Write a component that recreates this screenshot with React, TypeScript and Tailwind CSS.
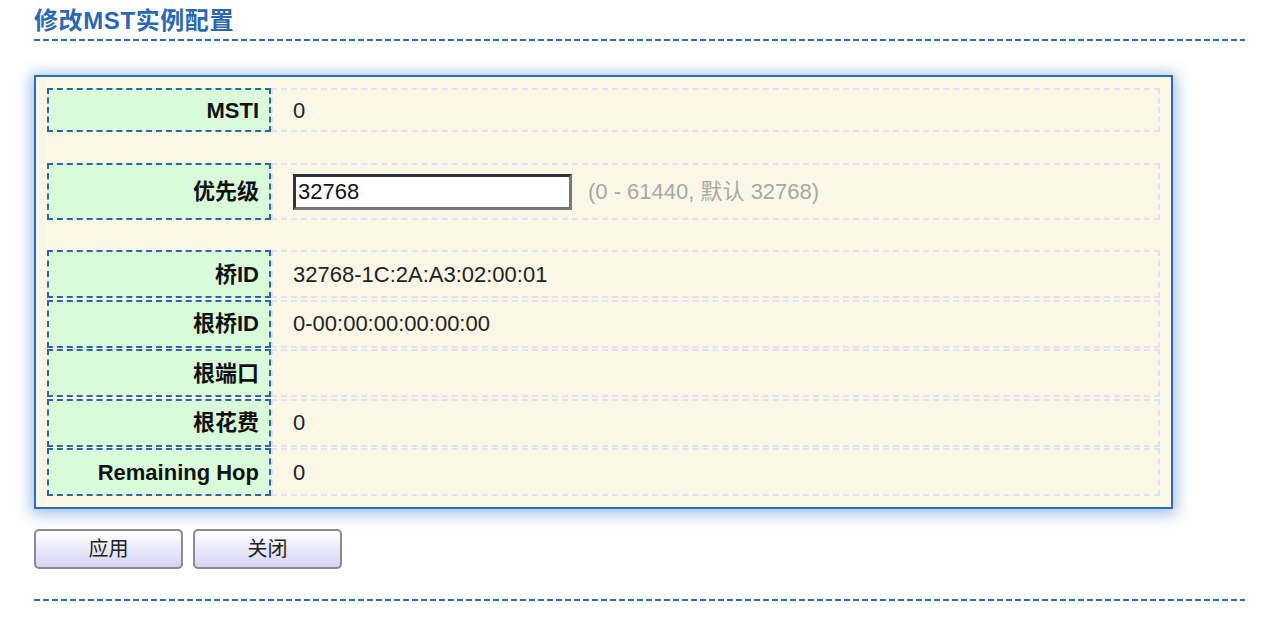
const rows = [
  { label: "桥ID", value: "32768-1C:2A:A3:02:00:01" },
  { label: "根桥ID", value: "0-00:00:00:00:00:00" },
  { label: "根端口", value: "" },
  { label: "根花费", value: "0" },
  { label: "Remaining Hop", value: "0" },
]

function DashLine() {
  return (
    <div className="h-[2px] w-full bg-[linear-gradient(to_right,#2f6db7_6px,transparent_6px)] bg-[length:9px_2px] bg-repeat-x" />
  )
}

function Row({ label, children, height }: { label: string; children?: React.ReactNode; height: string }) {
  return (
    <div className={`flex ${height}`}>
      <div className="flex w-[224px] shrink-0 items-center justify-end border-2 border-dashed border-[#2f64a8] bg-[#d9fbd9] pr-[10px] text-[22px] font-bold text-[#111]">
        {label}
      </div>
      <div className="flex flex-1 items-center border-2 border-dashed border-[#dfe1f5] pl-[20px] text-[22px] text-[#222]">
        {children}
      </div>
    </div>
  )
}

export default function App() {
  return (
    <div className="h-[619px] w-[1285px] overflow-hidden bg-white pl-[34px] pt-[4px] font-['Liberation_Sans','Noto_Sans_CJK_SC',sans-serif]">
      <div className="w-[1211px]">
        {/* Title */}
        <div className="h-[35px] text-[24px] font-bold leading-[33px] tracking-[0.6px] text-[#2a68b2]">修改MST实例配置</div>
        <DashLine />

        {/* Panel */}
        <div className="mt-[34px] w-[1139px] border-2 border-[#2e6bb8] bg-[#fbf7e7] p-[11px] shadow-[0_2px_14px_3px_rgba(40,110,200,0.45)]">
          <Row label="MSTI" height="h-[44px]">0</Row>

          <div className="mt-[31px]">
            <Row label="优先级" height="h-[57px]">
              <input
                defaultValue="32768"
                className="h-[36px] w-[279px] border-[3px] border-t-[#333] border-l-[#333] border-r-[#777] border-b-[#777] bg-white pl-[2px] text-[22px] text-[#111] outline-none"
              />
              <span className="ml-[16px] text-[22px] text-[#a8a8a8]">(0 - 61440, 默认 32768)</span>
            </Row>
          </div>

          <div className="mt-[30px] flex flex-col gap-[1.5px]">
            {rows.map((r) => (
              <Row key={r.label} label={r.label} height="h-[48px]">
                {r.value}
              </Row>
            ))}
          </div>
        </div>

        {/* Buttons */}
        <div className="mt-[20px] flex gap-[10px]">
          <button className="h-[40px] w-[149px] rounded-[5px] border-2 border-[#8a8a8a] bg-[linear-gradient(to_bottom,#ffffff,#d4d4f4)] text-[20px] text-[#222]">
            应用
          </button>
          <button className="h-[40px] w-[149px] rounded-[5px] border-2 border-[#8a8a8a] bg-[linear-gradient(to_bottom,#ffffff,#d4d4f4)] text-[20px] text-[#222]">
            关闭
          </button>
        </div>

        <div className="mt-[30px]">
          <DashLine />
        </div>
      </div>
    </div>
  )
}
